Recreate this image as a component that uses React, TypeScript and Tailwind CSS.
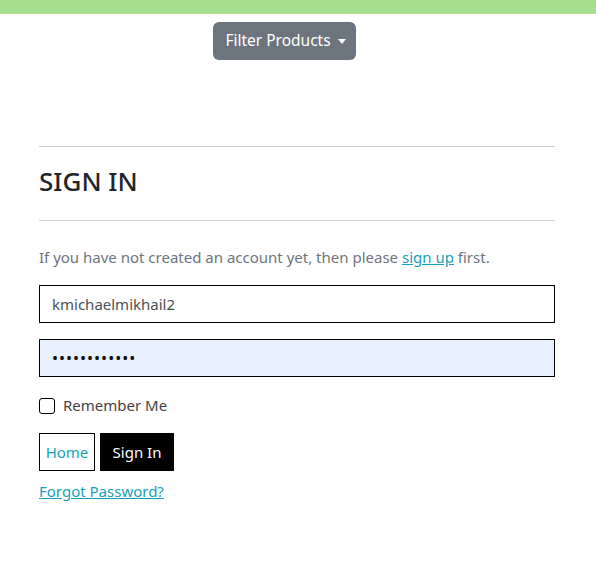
import React from "react";

export default function App() {
  return (
    <div className="min-h-[578px] bg-white" style={{ fontFamily: '"Noto Sans", "Open Sans", sans-serif' }}>
      <div className="h-[14px] bg-[#a8df8e]" />
      <div className="pl-[213px] pt-[8px]">
        <button className="h-[38px] w-[143px] rounded-[6px] bg-[#6c757d] text-white text-[15.5px] flex items-center justify-center gap-[7px] pl-[2px]">
          <span>Filter Products</span>
          <span className="w-0 h-0 border-l-[4px] border-r-[4px] border-t-[5px] border-l-transparent border-r-transparent border-t-white mt-[1px]" />
        </button>
      </div>
      <div className="mx-[39px] w-[516px] pt-[86px]">
        <hr className="border-t border-[#cfcfcf]" />
        <h1 className="text-[26px] font-medium leading-[30px] text-[#212529] mt-[19px] mb-[24px]">SIGN IN</h1>
        <hr className="border-t border-[#cfcfcf]" />
        <p className="text-[15px] text-[#6c757d] mt-[25px] leading-[22px]">
          If you have not created an account yet, then please{" "}
          <a href="#" className="text-[#17a2b8] underline">sign up</a> first.
        </p>
        <input
          className="block w-full h-[38px] mt-[17px] border border-black px-[12px] text-[15px] text-[#495057] outline-none"
          defaultValue="kmichaelmikhail2"
        />
        <input
          type="password"
          className="block w-full h-[38px] mt-[16px] border border-black px-[12px] text-[16px] tracking-[1px] text-[#111] bg-[#e8f0fe] outline-none"
          defaultValue="passwordxxxx"
        />
        <label className="flex items-center mt-[20px] h-[17px]">
          <span className="w-[16px] h-[16px] border border-black rounded-[3px] bg-white" />
          <span className="ml-[8px] text-[15px] text-[#444]">Remember Me</span>
        </label>
        <div className="flex mt-[19px] gap-[5px]">
          <button className="h-[38px] w-[56px] border border-black text-[#17a2b8] text-[15px]">Home</button>
          <button className="h-[38px] w-[74px] bg-black text-white text-[15px]">Sign In</button>
        </div>
        <a href="#" className="inline-block mt-[9px] text-[15px] text-[#17a2b8] underline">Forgot Password?</a>
      </div>
    </div>
  );
}
